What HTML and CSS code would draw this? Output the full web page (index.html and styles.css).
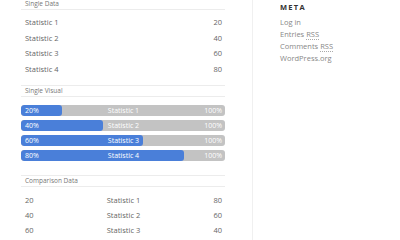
FILE: index.html
```html
<!DOCTYPE html>
<html lang="en">
<head>
    <meta charset="UTF-8">
    <meta name="viewport" content="width=device-width, initial-scale=1.0">
    <title>Statistics</title>
    <link rel="stylesheet" href="styles.css">
</head>
<body>
    <div class="page">
        <div class="main">
            <div class="section-title first">Single Data</div>
            <div class="data-list">
                <div class="data-row"><span>Statistic 1</span><span>20</span></div>
                <div class="data-row"><span>Statistic 2</span><span>40</span></div>
                <div class="data-row"><span>Statistic 3</span><span>60</span></div>
                <div class="data-row"><span>Statistic 4</span><span>80</span></div>
            </div>

            <div class="section-title">Single Visual</div>
            <div class="bar-list">
                <div class="bar">
                    <div class="bar-fill" style="width: 20%"></div>
                    <span class="bar-value">20%</span>
                    <span class="bar-label">Statistic 1</span>
                    <span class="bar-max">100%</span>
                </div>
                <div class="bar">
                    <div class="bar-fill" style="width: 40%"></div>
                    <span class="bar-value">40%</span>
                    <span class="bar-label">Statistic 2</span>
                    <span class="bar-max">100%</span>
                </div>
                <div class="bar">
                    <div class="bar-fill" style="width: 60%"></div>
                    <span class="bar-value">60%</span>
                    <span class="bar-label">Statistic 3</span>
                    <span class="bar-max">100%</span>
                </div>
                <div class="bar">
                    <div class="bar-fill" style="width: 80%"></div>
                    <span class="bar-value">80%</span>
                    <span class="bar-label">Statistic 4</span>
                    <span class="bar-max">100%</span>
                </div>
            </div>

            <div class="section-title">Comparison Data</div>
            <div class="compare-list">
                <div class="compare-row"><span>20</span><span class="mid">Statistic 1</span><span class="end">80</span></div>
                <div class="compare-row"><span>40</span><span class="mid">Statistic 2</span><span class="end">60</span></div>
                <div class="compare-row"><span>60</span><span class="mid">Statistic 3</span><span class="end">40</span></div>
            </div>
        </div>

        <div class="sidebar">
            <h2>META</h2>
            <ul>
                <li><a href="#">Log in</a></li>
                <li><a href="#">Entries <abbr>RSS</abbr></a></li>
                <li><a href="#">Comments <abbr>RSS</abbr></a></li>
                <li><a href="#">WordPress.org</a></li>
            </ul>
        </div>
    </div>
</body>
</html>
```

FILE: styles.css
```css
body {
    margin: 0;
    background-color: white;
    font-family: 'Open Sans', sans-serif;
    color: #666;
}

.page {
    display: flex;
    height: 240px;
    overflow: hidden;
}

.main {
    width: 204px;
    margin-left: 21px;
    margin-top: -2px;
}

.section-title {
    height: 12px;
    box-sizing: border-box;
    border-top: 1px solid #ececec;
    border-bottom: 1px solid #ececec;
    padding-left: 4px;
    font-size: 6.5px;
    line-height: 10px;
    color: #777;
}

.data-list {
    padding: 5px 0 8px;
}

.data-row {
    display: flex;
    justify-content: space-between;
    padding: 0 3px 0 4px;
    font-size: 7.5px;
    line-height: 15.5px;
}

.bar-list {
    display: flex;
    flex-direction: column;
    gap: 4px;
    padding: 8px 0 14px;
}

.bar {
    position: relative;
    display: flex;
    align-items: center;
    justify-content: space-between;
    height: 11px;
    padding: 0 3px 0 4px;
    background-color: #c3c3c3;
    border-radius: 3px;
    overflow: hidden;
    color: white;
    font-size: 7px;
}

.bar-fill {
    position: absolute;
    left: 0;
    top: 0;
    bottom: 0;
    background-color: #4a7fd9;
    border-radius: 3px;
}

.bar span {
    position: relative;
}

.bar-value, .bar-max {
    width: 40px;
}

.bar-max {
    text-align: right;
}

.compare-list {
    padding-top: 6px;
}

.compare-row {
    display: grid;
    grid-template-columns: 1fr 1fr 1fr;
    padding: 0 3px 0 4px;
    font-size: 7.5px;
    line-height: 15px;
}

.compare-row .mid {
    text-align: center;
}

.compare-row .end {
    text-align: right;
}

.sidebar {
    margin-left: 27px;
    border-left: 1px solid #f0f0f0;
    padding-left: 27px;
    height: 240px;
}

.sidebar h2 {
    margin: 2px 0 4px;
    font-size: 7.5px;
    line-height: 10px;
    letter-spacing: 1.3px;
    font-weight: bold;
    color: #333;
}

.sidebar ul {
    list-style: none;
    margin: 0;
    padding: 0;
}

.sidebar li {
    font-size: 7.5px;
    line-height: 12px;
}

.sidebar a {
    color: #888;
    text-decoration: none;
}

.sidebar abbr {
    text-decoration: none;
    border-bottom: 1px dotted #aaa;
}
```
